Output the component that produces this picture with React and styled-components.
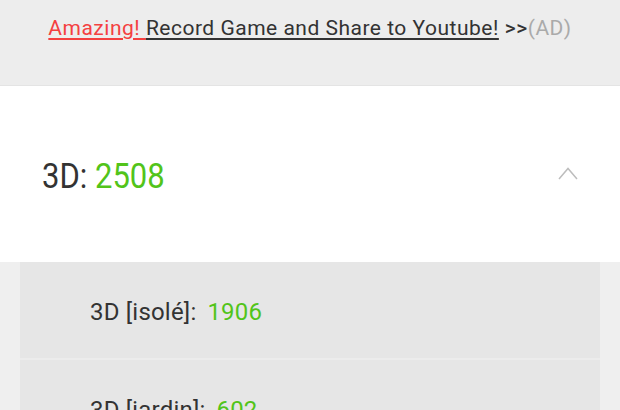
import React from "react";
import styled, { createGlobalStyle } from "styled-components";

const GlobalStyle = createGlobalStyle`
  html, body {
    margin: 0;
    padding: 0;
    background: #efefef;
    font-family: Roboto, "Liberation Sans", sans-serif;
  }
`;

const Page = styled.div`
  width: 620px;
  height: 410px;
  overflow: hidden;
  background: #efefef;
`;

const AdBar = styled.div`
  height: 86px;
  background: #ededed;
  border-bottom: 1px solid #e4e4e4;
  box-sizing: border-box;
  display: flex;
  justify-content: center;
  padding-top: 16px;
  font-size: 21px;
  letter-spacing: 0.5px;
  color: #333;
`;

const AdLink = styled.a`
  color: ${(p) => p.color || "#333"};
  text-decoration: underline;
  text-underline-offset: 3px;
`;

const Arrows = styled.span`
  color: #333;
  font-weight: 500;
  margin-left: 6px;
`;

const AdTag = styled.span`
  color: #aaa;
`;

const Header = styled.div`
  height: 176px;
  background: #fff;
  display: flex;
  align-items: center;
  justify-content: space-between;
  padding: 0 42px 0 42px;
  box-sizing: border-box;
`;

const Title = styled.div`
  font-size: 31px;
  color: #333;
  margin-top: 4px;
  transform: scaleY(1.12);
`;

const Score = styled.span`
  color: #52c41a;
`;

const Chevron = styled.svg`
  width: 20px;
  height: 13px;
  margin-bottom: 2px;
`;

const List = styled.div`
  margin: 0 20px;
  background: #e6e6e6;
`;

const Item = styled.div`
  height: 98px;
  display: flex;
  align-items: center;
  padding: 3px 0 0 70px;
  box-sizing: border-box;
  border-bottom: 2px solid #ececec;
  font-size: 24px;
  letter-spacing: 0.2px;
  color: #333;
`;

const Label = styled.span`
  margin-right: 11px;
`;

const items = [
  { name: "3D [isolé]:", value: 1906 },
  { name: "3D [jardin]:", value: 602 },
];

const App = () => (
  <Page>
    <GlobalStyle />
    <AdBar>
      <div>
        <AdLink color="#f44040">Amazing! </AdLink>
        <AdLink>Record Game and Share to Youtube!</AdLink>
        <Arrows>&gt;&gt;</Arrows>
        <AdTag>(AD)</AdTag>
      </div>
    </AdBar>
    <Header>
      <Title>
        3D: <Score>2508</Score>
      </Title>
      <Chevron viewBox="0 0 20 13">
        <polyline
          points="1,12 10,1.5 19,12"
          fill="none"
          stroke="#bdbdbd"
          strokeWidth="1.5"
        />
      </Chevron>
    </Header>
    <List>
      {items.map((item) => (
        <Item key={item.name}>
          <Label>{item.name}</Label>
          <Score>{item.value}</Score>
        </Item>
      ))}
    </List>
  </Page>
);

export default App;
